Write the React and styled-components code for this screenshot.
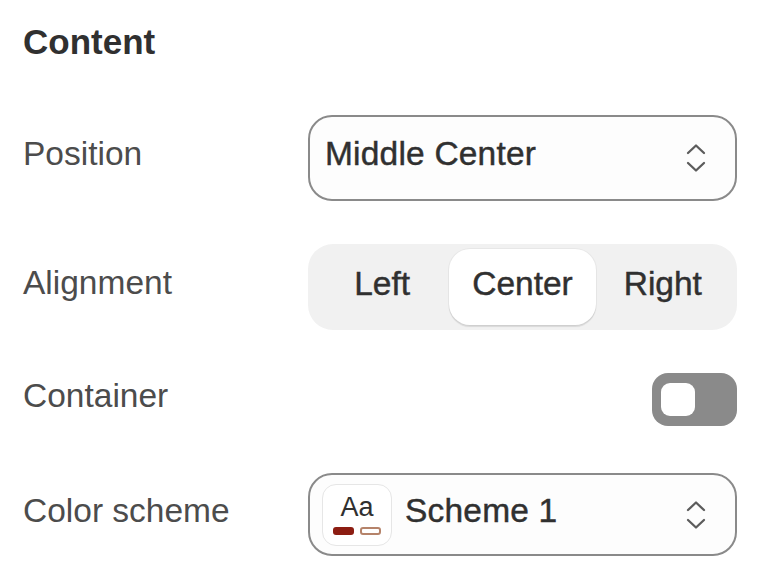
import React from "react";
import styled, { createGlobalStyle } from "styled-components";

const GlobalStyle = createGlobalStyle`
  body {
    margin: 0;
    background: #ffffff;
    font-family: "Liberation Sans", Arial, sans-serif;
  }
`;

const Panel = styled.div`
  padding: 22px 23px 0 23px;
  width: 760px;
  box-sizing: border-box;
`;

const Heading = styled.h2`
  margin: 0 0 54px 0;
  font-size: 35px;
  font-weight: 700;
  line-height: 1.12;
  color: #303030;
`;

const Rows = styled.div`
  display: flex;
  flex-direction: column;
  gap: 43px;
`;

const Row = styled.div`
  display: grid;
  grid-template-columns: 285px 1fr;
  align-items: center;
  min-height: ${(p) => p.$height || 86}px;
  margin-top: ${(p) => p.$extraTop || 0}px;
`;

const Label = styled.span`
  font-size: 33.5px;
  color: #4c4c4c;
  padding-bottom: 7px;
  line-height: 1.15;
`;

const Select = styled.div`
  display: flex;
  align-items: center;
  gap: 13px;
  height: ${(p) => p.$height || 86}px;
  box-sizing: border-box;
  border: 2.5px solid #8a8a8a;
  border-radius: 24px;
  background: #fdfdfd;
  padding: 0 28px 0 ${(p) => p.$padLeft || 15}px;
`;

const SelectText = styled.span`
  flex: 1;
  font-size: 33.5px;
  color: #303030;
  line-height: 1.15;
  padding-bottom: 7px;
  -webkit-text-stroke: 0.45px #303030;
  letter-spacing: 0.2px;
`;

const Chevrons = styled.svg`
  width: 22px;
  height: 32px;
  flex-shrink: 0;
`;

const Segmented = styled.div`
  display: grid;
  grid-template-columns: repeat(3, 1fr);
  height: 86px;
  box-sizing: border-box;
  padding: 5px 4px;
  background: #f1f1f1;
  border-radius: 25px;
`;

const Segment = styled.div`
  display: flex;
  align-items: center;
  justify-content: center;
  font-size: 33.5px;
  color: #303030;
  -webkit-text-stroke: 0.45px #303030;
  border-radius: 21px;
  background: ${(p) => (p.$active ? "#ffffff" : "transparent")};
  box-shadow: ${(p) =>
    p.$active ? "0 2px 1px rgba(0,0,0,0.10), 0 0 0 1px rgba(0,0,0,0.04)" : "none"};
  margin: 0 ${(p) => (p.$active ? "-3px" : "0")};
  span {
    padding-bottom: 7px;
  }
`;

const Toggle = styled.div`
  justify-self: end;
  width: 85px;
  height: 53px;
  box-sizing: border-box;
  border-radius: 16px;
  background: #8a8a8a;
  display: flex;
  align-items: center;
  padding-left: 9px;
`;

const Knob = styled.div`
  width: 34px;
  height: 33px;
  border-radius: 9px;
  background: #ffffff;
`;

const Swatch = styled.div`
  width: 70px;
  height: 62px;
  flex-shrink: 0;
  box-sizing: border-box;
  border: 1.5px solid #e6e6e6;
  border-radius: 14px;
  background: #ffffff;
  display: flex;
  flex-direction: column;
  align-items: center;
  justify-content: center;
  gap: 10px;
  padding-top: 3px;
`;

const SwatchText = styled.span`
  font-size: 27px;
  line-height: 20px;
  color: #303030;
`;

const Bars = styled.div`
  display: flex;
  gap: 6px;
`;

const Bar = styled.div`
  width: 21px;
  height: 8px;
  box-sizing: border-box;
  border-radius: 3px;
  background: ${(p) => (p.$outline ? "#ffffff" : "#8c1d12")};
  border: ${(p) => (p.$outline ? "2px solid #b5836a" : "none")};
`;

const UpDown = () => (
  <Chevrons viewBox="0 0 22 32" fill="none" stroke="#5c5c5c" strokeWidth="2.3" strokeLinecap="round" strokeLinejoin="round">
    <path d="M3 11 L11 3.5 L19 11" />
    <path d="M3 21 L11 28.5 L19 21" />
  </Chevrons>
);

const alignments = ["Left", "Center", "Right"];

export default function App() {
  return (
    <>
      <GlobalStyle />
      <Panel>
        <Heading>Content</Heading>
        <Rows>
          <Row>
            <Label>Position</Label>
            <Select $padLeft={15}>
              <SelectText>Middle Center</SelectText>
              <UpDown />
            </Select>
          </Row>
          <Row>
            <Label>Alignment</Label>
            <Segmented>
              {alignments.map((a) => (
                <Segment key={a} $active={a === "Center"}>
                  <span>{a}</span>
                </Segment>
              ))}
            </Segmented>
          </Row>
          <Row $height={53}>
            <Label>Container</Label>
            <Toggle>
              <Knob />
            </Toggle>
          </Row>
          <Row $height={83} $extraTop={4}>
            <Label>Color scheme</Label>
            <Select $height={83} $padLeft={12}>
              <Swatch>
                <SwatchText>Aa</SwatchText>
                <Bars>
                  <Bar />
                  <Bar $outline />
                </Bars>
              </Swatch>
              <SelectText>Scheme 1</SelectText>
              <UpDown />
            </Select>
          </Row>
        </Rows>
      </Panel>
    </>
  );
}
